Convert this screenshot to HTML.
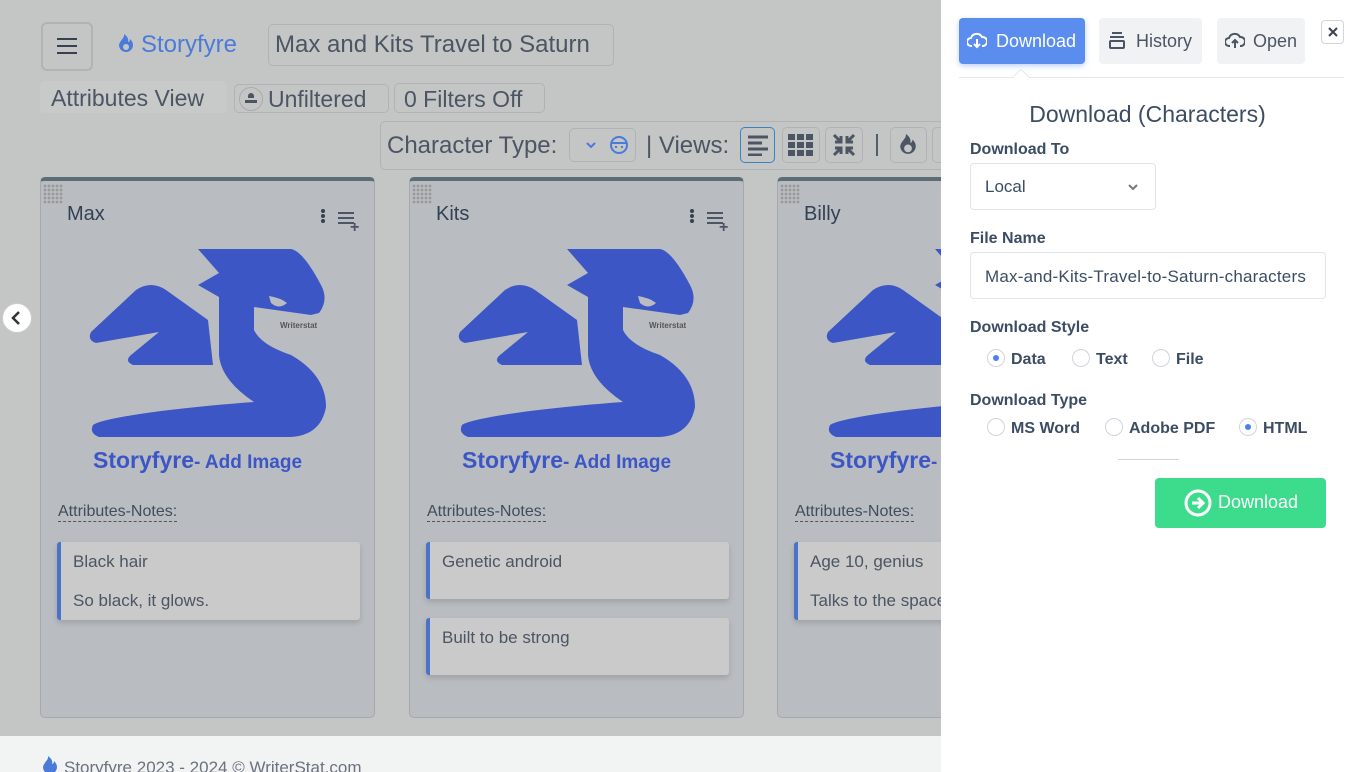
<!DOCTYPE html>
<html><head><meta charset="utf-8"><style>
*{box-sizing:border-box;margin:0;padding:0}
html,body{width:1364px;height:772px;overflow:hidden}
body{position:relative;background:#c4c6c6;font-family:"Liberation Sans",sans-serif;color:#4b5563}
.abs{position:absolute}
.box{position:absolute;border:1px solid #b0b3b4;border-radius:5px}
.card{position:absolute;top:177px;width:335px;height:541px;background:#b9bdc1;border:1px solid #a5a9ad;border-top:4px solid #5d6d75;border-radius:5px;overflow:hidden}
.card .name{position:absolute;left:26px;top:22px;font-size:20px;color:#334155}
.grid{position:absolute;left:2px;top:3px;width:20px;height:20px;background-image:radial-gradient(#999 1.3px,transparent 1.5px);background-size:4px 4px}
.note{position:absolute;left:16px;width:303px;background:#cacaca;border-left:4px solid #4a72c8;border-radius:3px;box-shadow:0 3px 6px rgba(0,0,0,.15);font-size:17px;color:#4b5563;padding:10px 12px}
.an{position:absolute;left:17px;top:322px;font-size:16px;color:#3f4d5c;border-bottom:1px dashed #555}
.panel{position:absolute;left:941px;top:0;width:423px;height:772px;background:#fff}
.lbl{position:absolute;left:29px;font-size:16px;font-weight:bold;color:#3c4d63}
.radio{display:inline-block;width:18px;height:18px;border:1px solid #d1d5db;border-radius:50%;vertical-align:-3px;margin-right:6px;position:relative}
.radio.on::after{content:"";position:absolute;left:5px;top:5px;width:6px;height:6px;border-radius:50%;background:#4f7ff0}
.opt{position:absolute;font-size:16px;font-weight:bold;color:#3c4d63}
.sf{position:absolute;left:52px;top:266px;font-size:23px;font-weight:bold;color:#3c56c6;white-space:nowrap}
.sf span{font-size:19px}
</style></head><body>

<!-- header -->
<div class="box" style="left:41px;top:22px;width:52px;height:49px;border-width:2px;border-radius:6px"></div>
<div class="abs" style="left:57px;top:38px;width:20px;height:2px;background:#374151;box-shadow:0 7px 0 #374151,0 14px 0 #374151"></div>
<svg class="abs" style="left:117px;top:34px" width="18" height="20" viewBox="0 0 18 20"><path d="M7 0C8 4 3 6 2 11a7 7 0 0 0 14 0c0-3-2-5-3-6 0 2-1 3-2 3C12 5 10 2 7 0z" fill="#4b7bd9"/><circle cx="9" cy="13" r="3" fill="#c4c6c6"/></svg>
<div class="abs" style="left:141px;top:31px;font-size:24px;color:#4b7bd9">Storyfyre</div>
<div class="box" style="left:268px;top:24px;width:346px;height:42px"></div>
<div class="abs" style="left:275px;top:31px;font-size:24px;color:#4b5563">Max and Kits Travel to Saturn</div>

<div class="abs" style="left:40px;top:81px;width:187px;height:32px;background:#c8caca;border-radius:5px"></div>
<div class="abs" style="left:51px;top:85px;font-size:23px;color:#4b5563">Attributes View</div>
<div class="box" style="left:234px;top:84px;width:155px;height:29px"></div>
<div class="abs" style="left:239px;top:87px;width:24px;height:24px;border:1px solid #aaa;border-radius:50%"></div>
<div class="abs" style="left:245px;top:93px;width:12px;height:10px;border-bottom:3px solid #4b5563"><div style="margin:0 auto;width:6px;height:5px;background:#4b5563;border-radius:3px 3px 0 0"></div></div>
<div class="abs" style="left:268px;top:86px;font-size:23px;color:#4b5563">Unfiltered</div>
<div class="box" style="left:394px;top:83px;width:151px;height:30px"></div>
<div class="abs" style="left:404px;top:86px;font-size:23px;color:#4b5563">0 Filters Off</div>

<div class="box" style="left:380px;top:121px;width:570px;height:49px;border-right:none"></div>
<div class="abs" style="left:387px;top:132px;font-size:24px;color:#4b5563">Character Type:</div>
<div class="box" style="left:569px;top:128px;width:67px;height:34px"></div>
<svg class="abs" style="left:585px;top:140px" width="12" height="10"><path d="M2 3l4 4 4-4" stroke="#4b7bd9" stroke-width="2" fill="none"/></svg>
<svg class="abs" style="left:609px;top:135px" width="20" height="20" viewBox="0 0 20 20"><circle cx="10" cy="10" r="8" stroke="#4b7bd9" stroke-width="2" fill="none"/><path d="M3 8h14M6 12h2M12 12h2" stroke="#4b7bd9" stroke-width="2"/></svg>
<div class="abs" style="left:646px;top:132px;font-size:24px;color:#4b5563">| Views:</div>
<div class="abs" style="left:740px;top:127px;width:35px;height:36px;border:1.5px solid #3b82c4;border-radius:5px"></div>
<svg class="abs" style="left:747px;top:134px" width="22" height="22"><path d="M1 3h20M1 9h14M1 15h20M1 21h14" stroke="#4b5563" stroke-width="3"/></svg>
<div class="box" style="left:782px;top:127px;width:38px;height:36px"></div>
<svg class="abs" style="left:788px;top:134px" width="26" height="22"><g fill="#4b5563"><rect x="0" y="0" width="7" height="6"/><rect x="9" y="0" width="7" height="6"/><rect x="18" y="0" width="7" height="6"/><rect x="0" y="8" width="7" height="6"/><rect x="9" y="8" width="7" height="6"/><rect x="18" y="8" width="7" height="6"/><rect x="0" y="16" width="7" height="6"/><rect x="9" y="16" width="7" height="6"/><rect x="18" y="16" width="7" height="6"/></g></svg>
<div class="box" style="left:825px;top:127px;width:38px;height:36px"></div>
<svg class="abs" style="left:832px;top:133px" width="24" height="24" viewBox="0 0 24 24"><g stroke="#4b5563" stroke-width="3" fill="none"><path d="M2 2l7 7M9 3v6H3M22 2l-7 7M15 3v6h6M2 22l7-7M9 21v-6H3M22 22l-7-7M15 21v-6h6"/></g></svg>
<div class="abs" style="left:874px;top:130px;font-size:23px;color:#4b5563">|</div>
<div class="box" style="left:890px;top:127px;width:37px;height:36px"></div>
<svg class="abs" style="left:898px;top:133px" width="20" height="24" viewBox="0 0 18 20"><path d="M7 0C8 4 3 6 2 11a7 7 0 0 0 14 0c0-3-2-5-3-6 0 2-1 3-2 3C12 5 10 2 7 0z" fill="#4b5563"/><circle cx="9" cy="13" r="3.5" fill="#c4c6c6"/></svg>
<div class="box" style="left:932px;top:127px;width:20px;height:36px"></div>

<!-- left nav -->
<div class="abs" style="left:2px;top:303px;width:30px;height:30px;border-radius:50%;background:#fff;border:1px solid #ccc"></div>
<svg class="abs" style="left:10px;top:310px" width="14" height="16"><path d="M9 2L3 8l6 6" stroke="#333" stroke-width="2.5" fill="none"/></svg>

<svg width="0" height="0" style="position:absolute"><defs>
<g id="drg" fill="#3c56c6" transform="translate(0,-6)">
<path d="M157 74 L250 74 Q262 76 280 110 Q288 125 278 138 L270 140 L213 132 L213 155 Q220 170 250 180 Q285 200 285 232 Q280 260 250 262 L58 262 Q48 258 52 250 Q60 244 120 236 Q170 230 213 227 Q180 205 178 180 L178 122 L157 110 L178 98 Z"/>
<path d="M50 157 L95 115 Q110 105 125 115 L167 145 L172 190 L92 190 Q83 186 90 180 L118 157 L55 168 Q46 165 50 157 Z"/>
</g></defs></svg>

<!-- cards -->
<div class="card" style="left:40px"><div class="grid"></div><div class="name">Max</div>
<div class="abs" style="left:280px;top:28px;width:4px;height:4px;border-radius:50%;background:#374151;box-shadow:0 5px 0 #374151,0 10px 0 #374151"></div>
<div class="abs" style="left:297px;top:31px;width:16px;height:2px;background:#4b5563;box-shadow:0 5px 0 #4b5563,0 10px 0 #4b5563"></div>
<div class="abs" style="left:309px;top:38px;font-size:16px;font-weight:bold;color:#4b5563">+</div>
<svg class="abs" style="left:0;top:0" width="335" height="300"><use href="#drg"/><path d="M228 115 Q240 117 246 122 Q238 129 230 122Z" fill="#b9bdc1"/></svg>
<div class="abs" style="left:239px;top:140px;font-size:8px;font-weight:bold;color:#555">Writerstat</div>
<div class="sf">Storyfyre<span>- Add Image</span></div>
<div class="an">Attributes-Notes:</div>
<div class="note" style="top:361px;height:78px;line-height:20px">Black hair<br><span style="display:block;margin-top:19px">So black, it glows.</span></div>
</div>

<div class="card" style="left:409px"><div class="grid"></div><div class="name">Kits</div>
<div class="abs" style="left:280px;top:28px;width:4px;height:4px;border-radius:50%;background:#374151;box-shadow:0 5px 0 #374151,0 10px 0 #374151"></div>
<div class="abs" style="left:297px;top:31px;width:16px;height:2px;background:#4b5563;box-shadow:0 5px 0 #4b5563,0 10px 0 #4b5563"></div>
<div class="abs" style="left:309px;top:38px;font-size:16px;font-weight:bold;color:#4b5563">+</div>
<svg class="abs" style="left:0;top:0" width="335" height="300"><use href="#drg"/><path d="M228 115 Q240 117 246 122 Q238 129 230 122Z" fill="#b9bdc1"/></svg>
<div class="abs" style="left:239px;top:140px;font-size:8px;font-weight:bold;color:#555">Writerstat</div>
<div class="sf">Storyfyre<span>- Add Image</span></div>
<div class="an">Attributes-Notes:</div>
<div class="note" style="top:361px;height:57px">Genetic android</div>
<div class="note" style="top:437px;height:57px">Built to be strong</div>
</div>

<div class="card" style="left:777px"><div class="grid"></div><div class="name">Billy</div>
<svg class="abs" style="left:0;top:0" width="335" height="300"><use href="#drg"/></svg>
<div class="sf">Storyfyre<span>- Add Image</span></div>
<div class="an">Attributes-Notes:</div>
<div class="note" style="top:361px;height:78px;line-height:20px">Age 10, genius<br><span style="display:block;margin-top:19px">Talks to the space</span></div>
</div>

<!-- footer -->
<div class="abs" style="left:0;top:736px;width:941px;height:36px;background:#f2f3f3"></div>
<svg class="abs" style="left:41px;top:756px" width="18" height="20" viewBox="0 0 18 20"><path d="M7 0C8 4 3 6 2 11a7 7 0 0 0 14 0c0-3-2-5-3-6 0 2-1 3-2 3C12 5 10 2 7 0z" fill="#4b7bd9"/></svg>
<div class="abs" style="left:64px;top:758px;font-size:17px;color:#6b7280">Storyfyre 2023 - 2024 ©  WriterStat.com</div>

<!-- panel -->
<div class="panel">
<div class="abs" style="left:18px;top:18px;width:126px;height:46px;background:#5b8def;border-radius:4px;box-shadow:0 2px 6px rgba(91,141,239,.4)"></div>
<svg class="abs" style="left:26px;top:32px" width="20" height="18" viewBox="0 0 20 18"><path d="M5 14H4a4 4 0 0 1 0-8 6 6 0 0 1 11-1 4.5 4.5 0 0 1 1 9h-1" fill="none" stroke="#fff" stroke-width="2"/><path d="M10 7v8M7 12l3 3 3-3" stroke="#fff" stroke-width="2" fill="none"/></svg>
<div class="abs" style="left:55px;top:31px;font-size:18px;color:#fff">Download</div>
<div class="abs" style="left:74px;top:71px;width:12px;height:12px;background:#fff;border-left:1px solid #e5e7eb;border-top:1px solid #e5e7eb;transform:rotate(45deg);z-index:2"></div>
<div class="abs" style="left:158px;top:18px;width:103px;height:46px;background:#f1f2f3;border-radius:4px"></div>
<div class="abs" style="left:168px;top:32px;width:16px;height:17px;"><div style="height:2px;margin:0 3px;background:#4b5563"></div><div style="height:2px;margin:2px 1px 0;background:#4b5563"></div><div style="height:9px;margin-top:2px;border:2px solid #4b5563;border-radius:2px"></div></div>
<div class="abs" style="left:195px;top:31px;font-size:18px;color:#4b5563">History</div>
<div class="abs" style="left:276px;top:18px;width:88px;height:46px;background:#f1f2f3;border-radius:4px"></div>
<svg class="abs" style="left:284px;top:32px" width="20" height="18" viewBox="0 0 20 18"><path d="M5 14H4a4 4 0 0 1 0-8 6 6 0 0 1 11-1 4.5 4.5 0 0 1 1 9h-1" fill="none" stroke="#4b5563" stroke-width="2"/><path d="M10 16V8M7 11l3-3 3 3" stroke="#4b5563" stroke-width="2" fill="none"/></svg>
<div class="abs" style="left:312px;top:31px;font-size:18px;color:#4b5563">Open</div>
<div class="abs" style="left:380px;top:20px;width:23px;height:24px;border:1px solid #d1d5db;border-radius:4px"></div>
<svg class="abs" style="left:386px;top:26px" width="12" height="12"><path d="M2 2l8 8M10 2l-8 8" stroke="#374151" stroke-width="2"/></svg>
<div class="abs" style="left:18px;top:77px;width:385px;height:1px;background:#e5e7eb"></div>
<div class="abs" style="left:0;top:101px;width:413px;text-align:center;font-size:23px;color:#3c4d63">Download (Characters)</div>
<div class="lbl" style="top:141px">Download To</div>
<div class="abs" style="left:29px;top:163px;width:186px;height:47px;border:1px solid #e0e3e7;border-radius:4px"></div>
<div class="abs" style="left:44px;top:177px;font-size:17px;color:#3c4d63">Local</div>
<svg class="abs" style="left:186px;top:183px" width="12" height="8"><path d="M2 2l4 4 4-4" stroke="#777" stroke-width="2" fill="none"/></svg>
<div class="lbl" style="top:230px">File Name</div>
<div class="abs" style="left:29px;top:252px;width:356px;height:47px;border:1px solid #e0e3e7;border-radius:4px;overflow:hidden;padding:14px 0 0 14px;font-size:17px;color:#3c4d63;white-space:nowrap;letter-spacing:0.2px">Max-and-Kits-Travel-to-Saturn-characters</div>
<div class="lbl" style="top:319px">Download Style</div>
<div class="opt" style="left:46px;top:349px"><span class="radio on"></span>Data</div>
<div class="opt" style="left:131px;top:349px"><span class="radio"></span>Text</div>
<div class="opt" style="left:211px;top:349px"><span class="radio"></span>File</div>
<div class="lbl" style="top:392px">Download Type</div>
<div class="opt" style="left:46px;top:418px"><span class="radio"></span>MS Word</div>
<div class="opt" style="left:164px;top:418px"><span class="radio"></span>Adobe PDF</div>
<div class="opt" style="left:298px;top:418px"><span class="radio on"></span>HTML</div>
<div class="abs" style="left:177px;top:459px;width:61px;height:1px;background:#d1d5db"></div>
<div class="abs" style="left:214px;top:478px;width:171px;height:50px;background:#3ddc8c;border-radius:4px"></div>
<svg class="abs" style="left:243px;top:489px" width="28" height="28" viewBox="0 0 28 28"><circle cx="14" cy="14" r="12" stroke="#fff" stroke-width="3" fill="none"/><path d="M8 14h11M14 9l5 5-5 5" stroke="#fff" stroke-width="3" fill="none"/></svg>
<div class="abs" style="left:277px;top:492px;font-size:18px;color:#fff">Download</div>
</div>
</body></html>
